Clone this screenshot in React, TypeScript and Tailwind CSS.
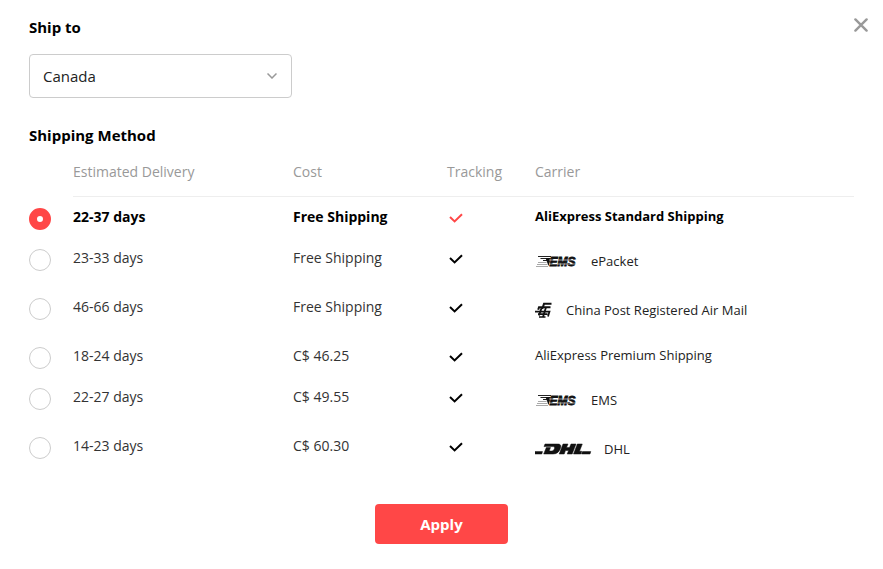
import { useState } from "react";
import clsx from "clsx";

function CloseIcon() {
  return (
    <svg viewBox="0 0 14 14" className="h-3.5 w-3.5" fill="none" stroke="currentColor" strokeWidth="2.4" strokeLinecap="round">
      <path d="M1.4 1.4 12.6 12.6M12.6 1.4 1.4 12.6" />
    </svg>
  );
}

function ChevronIcon() {
  return (
    <svg viewBox="0 0 10 6" className="h-1.5 w-2.5" fill="none" stroke="currentColor" strokeWidth="1.5">
      <path d="M.5.5 5 5 9.5.5" />
    </svg>
  );
}

function TickIcon() {
  return (
    <svg viewBox="0 0 14 10" className="h-2.5 w-3.5" fill="none" stroke="currentColor" strokeWidth="2">
      <path d="M1 4 5.6 8.4 13 1.2" />
    </svg>
  );
}

function EmsLogo() {
  return (
    <svg viewBox="0 0 44 18" className="h-[18px] w-11" aria-hidden="true">
      <path d="M3 4.5H16M5.5 6.5H15.4M8 8.5H14.8" stroke="#222" strokeWidth="1.2" />
      <path d="M10.5 6H15.8L13.6 14 12 10Z" fill="#111" />
      <path d="M3 10.5H11.5M2 12.5H12.5M1 14.5H13" stroke="#aaa" strokeWidth="1" />
      <text x="14.5" y="14.4" fontFamily="Liberation Sans, sans-serif" fontSize="12" fontWeight="700" fontStyle="italic" fill="#111" stroke="#111" strokeWidth=".9">EMS</text>
      <path d="M14 8H43M14 12H43" stroke="#fff" strokeWidth=".6" />
    </svg>
  );
}

function ChinaPostLogo() {
  return (
    <svg viewBox="0 0 19 16" className="h-4 w-[19px]" aria-hidden="true" fill="none" stroke="#111">
      <path d="M16.5 1.8H9L7.2 7M15.5 5.3H4L3.2 7.8" strokeWidth="2" />
      <path d="M0 9.6H14.5L13 14.5M12.5 12.2H3M10.5 15H4" strokeWidth="1.7" />
      <path d="M11 5.3 8 15M6.8 5.3 4 13.5" strokeWidth="1.8" />
    </svg>
  );
}

function DhlLogo() {
  return (
    <svg viewBox="0 0 57 12" className="h-3 w-[57px]" aria-hidden="true" fill="#111" stroke="#111" strokeWidth=".5">
      <path d="M0 8.6H7.5L6.8 11H0ZM47.5 8.6H55.8L55 11H46.5Z" />
      <path d="M10 1H22.5C26 1 26.4 3 25.4 5.4 24 9 21.8 11 18 11H8.7L11.3 4.6H15.5L14.2 8H16.6C18.6 8 19.8 6 19.5 4.5 19.4 3.8 18.8 3.6 18 3.6H9Z" />
      <path d="M28 1H33L31.5 4.6H34.5L36 1H41L37.2 11H32.2L33.6 7.5H30.5L29.2 11H24.2Z" />
      <path d="M42.3 1H47.3L44.5 8.3H46.8L45.8 11H38.5Z" />
    </svg>
  );
}

const methods = [
  { id: "standard", days: "22-37 days", cost: "Free Shipping", carrier: "AliExpress Standard Shipping" },
  { id: "epacket", days: "23-33 days", cost: "Free Shipping", carrier: "ePacket", logo: <EmsLogo /> },
  { id: "china-post", days: "46-66 days", cost: "Free Shipping", carrier: "China Post Registered Air Mail", logo: <ChinaPostLogo /> },
  { id: "premium", days: "18-24 days", cost: "C$ 46.25", carrier: "AliExpress Premium Shipping" },
  { id: "ems", days: "22-27 days", cost: "C$ 49.55", carrier: "EMS", logo: <EmsLogo /> },
  { id: "dhl", days: "14-23 days", cost: "C$ 60.30", carrier: "DHL", logo: <DhlLogo /> },
];

export default function App() {
  const [selected, setSelected] = useState("standard");

  return (
    <main className="relative bg-white px-[29px] pt-[17px] pb-6 font-['Open_Sans',sans-serif] text-sm leading-5 text-black">
      <button type="button" aria-label="Close" className="absolute top-[18px] right-[15px] text-[#999]">
        <CloseIcon />
      </button>

      {/* Country */}
      <label htmlFor="country" className="block text-[15px] font-bold">Ship to</label>
      <div className="relative mt-[17px] w-[263px]">
        <select
          id="country"
          className="block h-11 w-full appearance-none rounded border border-[#ccc] bg-white px-[13px] text-[15px] text-[#222]"
        >
          <option>Canada</option>
        </select>
        <span className="pointer-events-none absolute inset-y-0 right-[15px] flex items-center text-[#999]">
          <ChevronIcon />
        </span>
      </div>

      {/* Methods */}
      <h2 className="mt-[27px] text-[15px] font-bold">Shipping Method</h2>
      <table className="mt-[17px] w-full table-fixed text-left">
        <colgroup>
          <col className="w-11" />
          <col className="w-[220px]" />
          <col className="w-[154px]" />
          <col className="w-[88px]" />
          <col />
        </colgroup>
        <thead className="text-[#999]">
          <tr>
            <td />
            <th className="border-b border-[#eee] pb-3.5 font-normal">Estimated Delivery</th>
            <th className="border-b border-[#eee] pb-3.5 font-normal">Cost</th>
            <th className="border-b border-[#eee] pb-3.5 font-normal">Tracking</th>
            <th className="border-b border-[#eee] pb-3.5 font-normal">Carrier</th>
          </tr>
        </thead>
        <tbody>
          {methods.map((method) => {
            const active = method.id === selected;
            return (
              <tr
                key={method.id}
                className={clsx("align-top", method.logo ? "h-[49px]" : "h-[41px]", active ? "font-bold" : "text-[#333]")}
              >
                <td className="pt-[11px]">
                  <input
                    id={method.id}
                    type="radio"
                    name="method"
                    checked={active}
                    onChange={() => setSelected(method.id)}
                    className="block h-[22px] w-[22px] appearance-none rounded-full border border-[#ccc] bg-white checked:border-8 checked:border-[#ff4747]"
                  />
                </td>
                <td className="pt-2.5"><label htmlFor={method.id}>{method.days}</label></td>
                <td className="pt-2.5">{method.cost}</td>
                <td className={clsx("pt-4 pl-0.5", active ? "text-[#ff4747]" : "text-black")}><TickIcon /></td>
                <td className={clsx("text-[13px]", method.logo ? "pt-[13px]" : "pt-[9px]", active ? "text-black" : "text-[#222]")}>
                  <span className="flex items-center gap-3">
                    {method.logo}
                    {method.carrier}
                  </span>
                </td>
              </tr>
            );
          })}
        </tbody>
      </table>

      <button
        type="button"
        className="mx-auto mt-[29px] block h-10 w-[133px] rounded bg-[#ff4747] text-[15px] font-bold text-white"
      >
        Apply
      </button>
    </main>
  );
}
